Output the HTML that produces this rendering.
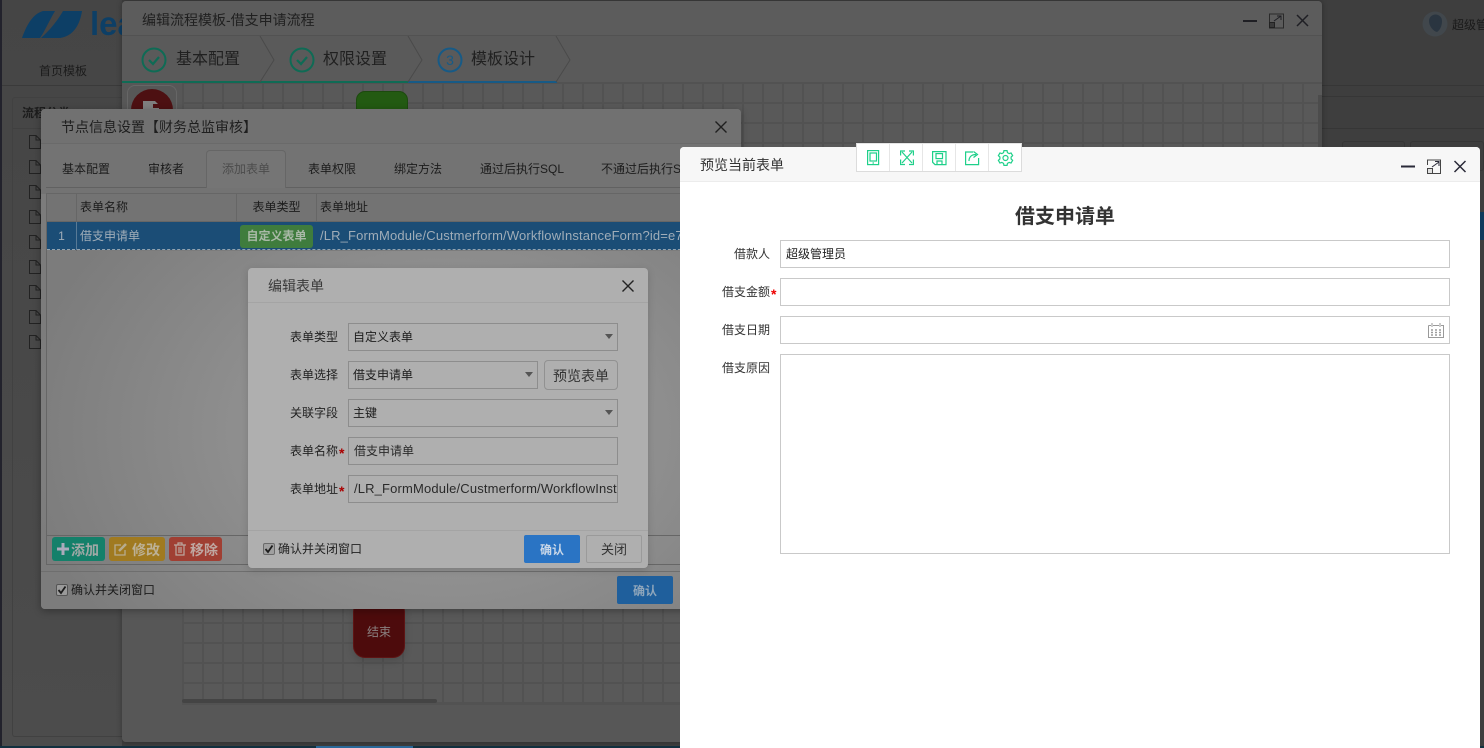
<!DOCTYPE html>
<html lang="zh-CN">
<head>
<meta charset="utf-8">
<title>预览当前表单</title>
<style>
html,body{margin:0;padding:0;width:1484px;height:748px;overflow:hidden;background:#3e3e3e}
body{position:relative;font-family:"Liberation Sans","Noto Sans CJK SC",sans-serif;font-size:12px;color:#222}
div,span,svg{position:absolute;box-sizing:border-box}
.t{white-space:nowrap;line-height:16px;height:16px}
.c{text-align:center}
.r{text-align:right}
.star{color:#a00;font-size:14px}
</style>
</head>
<body>
<!-- background page -->
<div style="left:0;top:0;width:122px;height:748px;background:linear-gradient(#454545,#4c4c4c)"></div>
<div style="left:0;top:0;width:2px;height:748px;background:#22222c"></div>
<svg style="left:22px;top:11px" width="60" height="28" viewBox="0 0 60 28"><path d="M0 27C5 13 11 3 21 0H33C27 10 23 20 18 27Z" fill="#0d3f66"/><path d="M19 27C28 19 36 9 41 0H60C58 13 52 25 38 27Z" fill="#0d3f66"/></svg>
<div class="t" style="left:90px;top:6px;height:36px;line-height:36px;font-size:33px;font-weight:bold;color:#0d3f66;width:32px;overflow:hidden">lea</div>
<div class="t" style="left:39px;top:63px;color:#1c1c1c">首页模板</div>
<div style="left:2px;top:85px;width:120px;height:1px;background:#3a3a3a"></div>
<div style="left:12px;top:97px;width:110px;height:640px;border:1px solid #414141;border-right:0;border-radius:3px 0 0 3px"></div>
<div style="left:13px;top:128px;width:109px;height:1px;background:#404040"></div>
<div class="t" style="left:22px;top:105px;font-weight:bold;color:#1c1c1c">流程分类</div>
<svg style="left:29px;top:135px" width="12" height="216" viewBox="0 0 12 216" fill="none" stroke="#222">
  <path d="M.5 .5H7L11.500 5V13.500H.5ZM7 .5V5H11.500"/>
  <path d="M.5 25.500H7L11.500 30V38.500H.5ZM7 25.500V30H11.500"/>
  <path d="M.5 50.500H7L11.500 55V63.500H.5ZM7 50.500V55H11.500"/>
  <path d="M.5 75.500H7L11.500 80V88.500H.5ZM7 75.500V80H11.500"/>
  <path d="M.5 100.500H7L11.500 105V113.500H.5ZM7 100.500V105H11.500"/>
  <path d="M.5 125.500H7L11.500 130V138.500H.5ZM7 125.500V130H11.500"/>
  <path d="M.5 150.500H7L11.500 155V163.500H.5ZM7 150.500V155H11.500"/>
  <path d="M.5 175.500H7L11.500 180V188.500H.5ZM7 175.500V180H11.500"/>
  <path d="M.5 200.500H7L11.500 205V213.500H.5ZM7 200.500V205H11.500"/>
</svg>
<div style="left:0;top:746px;width:1484px;height:2px;background:#12303f"></div>
<div style="left:316px;top:746px;width:97px;height:2px;background:#2b6a9b"></div>

<!-- right side behind -->
<svg style="left:1422px;top:11px" width="26" height="26" viewBox="0 0 26 26"><circle cx="13" cy="13" r="12.500" fill="#41474c"/><path d="M7 10a6.500 6.500 0 0 1 13 0c0 5-2 9-5 11-4-1-8-6-8-11z" fill="#2a3540"/></svg>
<div class="t" style="left:1452px;top:17px;color:#1a1a1a;width:32px;overflow:hidden">超级管理员</div>
<div style="left:1322px;top:85px;width:162px;height:1px;background:#363636"></div>
<div style="left:1322px;top:96px;width:162px;height:1px;background:#363636"></div>
<div style="left:1322px;top:128px;width:162px;height:1px;background:#363636"></div>
<div style="left:1342px;top:141px;width:63px;height:30px;border:1px solid #363636;border-radius:3px"></div>
<div style="left:1410px;top:141px;width:74px;height:30px;border:1px solid #363636;border-radius:3px"></div>
<div style="left:1480px;top:212px;width:4px;height:28px;background:#0f3a5c"></div>

<!-- flow template dialog -->
<div style="left:122px;top:1px;width:1200px;height:741px;background:#585858;border-radius:4px;overflow:hidden;box-shadow:0 0 6px rgba(0,0,0,.3)">
  <div style="left:0;top:0;width:1200px;height:35px;background:#5c5c5c;border-bottom:1px solid #525252"></div>
  <div style="left:0;top:35px;width:1200px;height:47px;background:#5a5a5a"></div>
  <div style="left:60px;top:81px;width:1140px;height:622px;background-color:#595959;background-image:linear-gradient(90deg,#525252 2px,transparent 2px),linear-gradient(#525252 2px,transparent 2px);background-size:20px 20px;background-position:0 0"></div>
  <div style="left:0;top:81px;width:60px;height:660px;background:#575757"></div>
  <div style="left:60px;top:703px;width:1140px;height:38px;background:#575757;border-top:1px solid #525252"></div>
  <div style="left:60px;top:698px;width:255px;height:4px;background:#444;border-radius:2px"></div>
  <div style="left:1196px;top:94px;width:4px;height:400px;background:#4c4c4c"></div>
</div>
<div class="t" style="left:142px;top:12px;font-size:14px;color:#202020">编辑流程模板-借支申请流程</div>
<svg style="left:1241px;top:11px" width="70" height="20" viewBox="0 0 70 20" fill="none" stroke="#1f1f24"><path d="M2 10H16" stroke-width="2"/><rect x="28.500" y="3" width="14" height="14" stroke="#2a2a2a"/><rect x="28.500" y="11.500" width="5" height="5" fill="#3a3a3a" stroke="#222"/><path d="M33 10L40 5M36 5H40V9" stroke-width="1"/><path d="M56 4L67 15M67 4L56 15" stroke-width="1.500"/></svg>

<!-- steps -->
<div style="left:122px;top:81px;width:286px;height:2px;background:#0f6b55"></div>
<div style="left:408px;top:81px;width:149px;height:2px;background:#175a86"></div>
<svg style="left:122px;top:36px" width="460" height="47" viewBox="0 0 460 47" fill="none">
  <path d="M138 0L152 24L138 46M286 0L300 24L286 46M434 0L448 24L434 46" stroke="#4a4a4a"/>
  <circle cx="32" cy="24" r="11.500" stroke="#0f6b55" stroke-width="2"/><path d="M27 24l4 4 6-7" stroke="#0f6b55" stroke-width="2.200"/>
  <circle cx="180" cy="24" r="11.500" stroke="#0f6b55" stroke-width="2"/><path d="M175 24l4 4 6-7" stroke="#0f6b55" stroke-width="2.200"/>
  <circle cx="328" cy="24" r="11.500" stroke="#175a86" stroke-width="2"/>
</svg>
<div class="t c" style="left:440px;top:52px;width:20px;font-size:14px;color:#175a86">3</div>
<div class="t" style="left:176px;top:52px;font-size:16px;color:#202020">基本配置</div>
<div class="t" style="left:323px;top:52px;font-size:16px;color:#202020">权限设置</div>
<div class="t" style="left:471px;top:52px;font-size:16px;color:#202020">模板设计</div>

<!-- nodes -->
<div style="left:127px;top:85px;width:50px;height:40px;border:1px solid #666;border-bottom:0;border-radius:8px 8px 0 0"></div>
<div style="left:131px;top:89px;width:42px;height:42px;border-radius:50%;background:#4d1012"></div>
<svg style="left:143px;top:101px" width="18" height="12" viewBox="0 0 18 12"><path d="M0 0H12L15 3H10V7H16V12H0Z" fill="#7f7f7f"/></svg>
<div style="left:356px;top:91px;width:52px;height:30px;background:#235a12;border:1px solid #1c4a0e;border-radius:9px 9px 0 0"></div>
<div style="left:353px;top:600px;width:52px;height:58px;background:#4d0b0c;border:1px solid #5e1414;border-radius:12px;box-shadow:0 3px 8px rgba(0,0,0,.15)"></div>
<div class="t c" style="left:353px;top:624px;width:52px;color:#8a8080">结束</div>

<!-- node dialog -->
<div style="left:41px;top:109px;width:700px;height:500px;background:#7c7c7c;border-radius:4px;overflow:hidden;box-shadow:0 2px 8px rgba(0,0,0,.3)">
  <div style="left:0;top:142px;width:700px;height:358px;background:radial-gradient(ellipse 430px 320px at 407px 180px,#a0a0a0,#7c7c7c 100%)"></div>
  <div style="left:0;top:0;width:700px;height:35px;background:#717171;border-bottom:1px solid #6a6a6a"></div>
  <div style="left:0;top:35px;width:700px;height:50px;background:#737373"></div>
  <div style="left:5px;top:78px;width:695px;height:1px;background:#616161"></div>
  <div style="left:165px;top:41px;width:80px;height:38px;background:#757575;border:1px solid #666;border-bottom:0;border-radius:4px 4px 0 0"></div>
  <div style="left:5px;top:84px;width:695px;height:372px;border:1px solid #666"></div>
  <div style="left:6px;top:85px;width:694px;height:28px;background:#737373;border-bottom:1px solid #666"></div>
  <div style="left:35px;top:85px;width:1px;height:57px;background:#666"></div>
  <div style="left:195px;top:85px;width:1px;height:28px;background:#666"></div>
  <div style="left:275px;top:85px;width:1px;height:28px;background:#666"></div>
  <div style="left:6px;top:113px;width:694px;height:28px;background:#1b4d76;border-bottom:1px dashed #92a3b0"></div>
  <div style="left:35px;top:113px;width:1px;height:28px;background:#587a96"></div>
  <div style="left:199px;top:116px;width:73px;height:23px;background:#3f7c3d;border-radius:3px"></div>
  <div style="left:5px;top:426px;width:695px;height:1px;background:#666"></div>
  <div style="left:0;top:462px;width:700px;height:1px;background:#6e6e6e"></div>
  <div style="left:576px;top:467px;width:56px;height:28px;background:#1f5f9c;border-radius:2px"></div>
</div>
<div class="t" style="left:61px;top:119px;font-size:14px;color:#1e1e1e">节点信息设置【财务总监审核】</div>
<svg style="left:714px;top:120px" width="14" height="14" viewBox="0 0 14 14"><path d="M1.500 1.500L12.500 12.500M12.500 1.500L1.500 12.500" stroke="#1f1f1f" stroke-width="1.400"/></svg>
<div class="t" style="left:62px;top:161px;color:#1c1c1c">基本配置</div>
<div class="t" style="left:148px;top:161px;color:#1c1c1c">审核者</div>
<div class="t" style="left:222px;top:161px;color:#4c4c4c">添加表单</div>
<div class="t" style="left:308px;top:161px;color:#1c1c1c">表单权限</div>
<div class="t" style="left:394px;top:161px;color:#1c1c1c">绑定方法</div>
<div class="t" style="left:480px;top:161px;color:#1c1c1c">通过后执行SQL</div>
<div class="t" style="left:601px;top:161px;width:79px;overflow:hidden;color:#1c1c1c">不通过后执行SQL</div>
<div class="t" style="left:80px;top:199px;color:#1c1c1c">表单名称</div>
<div class="t c" style="left:237px;top:199px;width:79px;color:#1c1c1c">表单类型</div>
<div class="t" style="left:320px;top:199px;color:#1c1c1c">表单地址</div>
<div class="t c" style="left:47px;top:228px;width:29px;color:#a0adb8">1</div>
<div class="t" style="left:80px;top:228px;color:#a0adb8">借支申请单</div>
<div class="t c" style="left:240px;top:228px;width:73px;color:#a9b9a7;font-weight:bold">自定义表单</div>
<div class="t" style="left:320px;top:228px;width:360px;overflow:hidden;color:#a0adb8;font-size:13px;letter-spacing:.15px">/LR_FormModule/Custmerform/WorkflowInstanceForm?id=e7</div>

<!-- node toolbar buttons -->
<div style="left:52px;top:537px;width:53px;height:24px;background:#14806a;border-radius:3px"></div>
<div style="left:109px;top:537px;width:56px;height:24px;background:#a07a20;border-radius:3px"></div>
<div style="left:169px;top:537px;width:53px;height:24px;background:#a03f33;border-radius:3px"></div>
<svg style="left:57px;top:543px" width="12" height="12" viewBox="0 0 12 12"><path d="M6 0V12M0 6H12" stroke="#aab" stroke-width="3"/></svg>
<svg style="left:114px;top:542px" width="14" height="14" viewBox="0 0 14 14" fill="none" stroke="#b7ac8f"><path d="M11 8V13H1V3H7" stroke-width="1.300"/><path d="M5 9L12 2" stroke-width="2.500"/></svg>
<svg style="left:174px;top:542px" width="12" height="14" viewBox="0 0 12 14" fill="none" stroke="#bba79f" stroke-width="1.200"><path d="M0 3H12M4 3V1H8V3M2 3V13H10V3M5 5V11M7 5V11"/></svg>
<div class="t" style="left:71px;top:542px;font-size:14px;font-weight:bold;color:#a0a8a6">添加</div>
<div class="t" style="left:132px;top:542px;font-size:14px;font-weight:bold;color:#bcb196">修改</div>
<div class="t" style="left:190px;top:542px;font-size:14px;font-weight:bold;color:#bfa8a2">移除</div>
<div style="left:56px;top:584px;width:12px;height:12px;background:#9a9a9a;border:1px solid #555;border-radius:2px"></div>
<svg style="left:57px;top:585px" width="10" height="10" viewBox="0 0 10 10"><path d="M1.500 5L4 8L8.500 1.500" fill="none" stroke="#1c1c1c" stroke-width="1.800"/></svg>
<div class="t" style="left:71px;top:582px;color:#1c1c1c">确认并关闭窗口</div>
<div class="t c" style="left:617px;top:583px;width:56px;color:#8fa6bb;font-weight:bold">确认</div>

<!-- edit dialog -->
<div style="left:248px;top:268px;width:400px;height:300px;background:#afafaf;border-radius:4px;box-shadow:0 2px 8px rgba(0,0,0,.15)">
  <div style="left:0;top:34px;width:400px;height:1px;background:#a4a4a4"></div>
  <div style="left:0;top:262px;width:400px;height:1px;background:#a4a4a4"></div>
</div>
<div class="t" style="left:268px;top:278px;font-size:14px;color:#3a3a3a">编辑表单</div>
<svg style="left:621px;top:279px" width="14" height="14" viewBox="0 0 14 14"><path d="M1.500 1.500L12.500 12.500M12.500 1.500L1.500 12.500" stroke="#222" stroke-width="1.400"/></svg>
<div class="t r" style="left:278px;top:329px;width:60px;color:#222">表单类型</div>
<div class="t r" style="left:278px;top:367px;width:60px;color:#222">表单选择</div>
<div class="t r" style="left:278px;top:405px;width:60px;color:#222">关联字段</div>
<div class="t r" style="left:278px;top:443px;width:60px;color:#222">表单名称</div>
<div class="t r" style="left:278px;top:481px;width:60px;color:#222">表单地址</div>
<div class="t star" style="left:339px;top:445px;font-weight:bold">*</div>
<div class="t star" style="left:339px;top:483px;font-weight:bold">*</div>
<div style="left:348px;top:323px;width:270px;height:28px;border:1px solid #8d8d8d"></div>
<div style="left:348px;top:361px;width:190px;height:28px;border:1px solid #8d8d8d"></div>
<div style="left:544px;top:360px;width:74px;height:30px;border:1px solid #919191;border-radius:4px"></div>
<div style="left:348px;top:399px;width:270px;height:28px;border:1px solid #8d8d8d"></div>
<div style="left:348px;top:437px;width:270px;height:28px;border:1px solid #8d8d8d"></div>
<div style="left:348px;top:475px;width:270px;height:28px;border:1px solid #8d8d8d"></div>
<div class="t" style="left:353px;top:329px;color:#1c1c1c">自定义表单</div>
<div class="t" style="left:353px;top:367px;color:#1c1c1c">借支申请单</div>
<div class="t c" style="left:544px;top:368px;width:74px;font-size:14px;color:#333">预览表单</div>
<div class="t" style="left:353px;top:405px;color:#1c1c1c">主键</div>
<div class="t" style="left:354px;top:443px;color:#2a2a2a">借支申请单</div>
<div class="t" style="left:354px;top:481px;width:263px;overflow:hidden;color:#2a2a2a;font-size:13px;letter-spacing:.15px">/LR_FormModule/Custmerform/WorkflowInstanceForm</div>
<svg style="left:605px;top:334px" width="8" height="5" viewBox="0 0 8 5"><path d="M0 0H8L4 5Z" fill="#555"/></svg>
<svg style="left:525px;top:372px" width="8" height="5" viewBox="0 0 8 5"><path d="M0 0H8L4 5Z" fill="#555"/></svg>
<svg style="left:605px;top:410px" width="8" height="5" viewBox="0 0 8 5"><path d="M0 0H8L4 5Z" fill="#555"/></svg>
<div style="left:263px;top:543px;width:12px;height:12px;background:#a0a0a0;border:1px solid #6a6a6a;border-radius:2px"></div>
<svg style="left:264px;top:544px" width="10" height="10" viewBox="0 0 10 10"><path d="M1.500 5L4 8L8.500 1.500" fill="none" stroke="#1c1c1c" stroke-width="1.800"/></svg>
<div class="t" style="left:278px;top:541px;color:#222">确认并关闭窗口</div>
<div style="left:524px;top:535px;width:56px;height:28px;background:#2a74c4;border-radius:2px"></div>
<div class="t c" style="left:524px;top:542px;width:56px;color:#c8d7e8;font-weight:bold">确认</div>
<div style="left:586px;top:535px;width:56px;height:28px;border:1px solid #9a9a9a;border-radius:2px"></div>
<div class="t c" style="left:586px;top:542px;width:56px;font-size:13px;color:#333">关闭</div>

<!-- preview dialog -->
<div style="left:680px;top:147px;width:800px;height:601px;background:#fff;border-radius:4px 4px 0 0;overflow:hidden">
  <div style="left:0;top:0;width:800px;height:35px;background:#f7f7f7;border-bottom:1px solid #ececec"></div>
</div>
<div class="t" style="left:700px;top:157px;font-size:14px;color:#333">预览当前表单</div>
<svg style="left:1399px;top:157px" width="70" height="20" viewBox="0 0 70 20" fill="none" stroke="#2a2a38"><path d="M2 9.500H16" stroke-width="2"/><path d="M28.500 8V3H41.500V16.500H33" stroke="#444"/><rect x="28.500" y="11.500" width="5" height="5" stroke="#444" fill="#e0e0e0"/><path d="M33 10L40 5M36 4.500H40V9"/><path d="M55.500 4L66.500 15M66.500 4L55.500 15" stroke-width="1.500"/></svg>

<div style="left:856px;top:143px;width:166px;height:29px;background:#fff;border:1px solid #dcdcdc;border-top-color:#e4e4e4"></div>
<div style="left:889px;top:144px;width:1px;height:27px;background:#e6e6e6"></div>
<div style="left:922px;top:144px;width:1px;height:27px;background:#e6e6e6"></div>
<div style="left:955px;top:144px;width:1px;height:27px;background:#e6e6e6"></div>
<div style="left:988px;top:144px;width:1px;height:27px;background:#e6e6e6"></div>
<svg style="left:865px;top:149px" width="150" height="18" viewBox="0 0 150 18" fill="none" stroke="#1fd08a" stroke-width="1.200">
  <rect x="2.600" y="1.600" width="11" height="14"/><rect x="5" y="4" width="6.500" height="8"/><path d="M7.500 14H9"/>
  <path d="M37 3L47 14M47 3L37 14M35.600 6.500V2H40M48.400 6.500V2H44M35.600 10.500V15.500H40M48.400 10.500V15.500H44"/>
  <path d="M67.600 2.600H81V15.600H70L67.600 13.200Z"/><rect x="71" y="4.600" width="6.500" height="5"/><path d="M72 15.600V12H77V15.600"/>
  <path d="M108 3H100.600V15.600H113.600V9"/><path d="M104 12C104 7.500 107 5.500 111 5.500M108.500 2.500L112.500 5.500L108.500 8.500"/>
  <g transform="translate(140.500 9)"><path d="M-1.560 -7.340L1.560 -7.340L1.950 -5.360L3.660 -4.370L5.570 -5.020L7.130 -2.320L5.610 -.99L5.610 .99L7.130 2.320L5.570 5.020L3.660 4.370L1.950 5.360L1.560 7.340L-1.560 7.340L-1.950 5.360L-3.660 4.370L-5.570 5.020L-7.130 2.320L-5.610 .99L-5.610 -.99L-7.130 -2.320L-5.570 -5.020L-3.660 -4.370L-1.950 -5.360Z"/><circle r="2.500"/></g>
</svg>

<div class="t c" style="left:680px;top:205px;width:770px;height:24px;line-height:24px;font-size:20px;font-weight:bold;color:#333">借支申请单</div>
<div class="t r" style="left:690px;top:246px;width:80px;color:#333">借款人</div>
<div class="t r" style="left:690px;top:284px;width:80px;color:#333">借支金额</div>
<div class="t" style="left:771px;top:286px;color:#e00;font-weight:bold;font-size:14px">*</div>
<div class="t r" style="left:690px;top:322px;width:80px;color:#333">借支日期</div>
<div class="t r" style="left:690px;top:360px;width:80px;color:#333">借支原因</div>
<div style="left:780px;top:240px;width:670px;height:28px;border:1px solid #c9c9c9"></div>
<div class="t" style="left:786px;top:246px;color:#222">超级管理员</div>
<div style="left:780px;top:278px;width:670px;height:28px;border:1px solid #c9c9c9"></div>
<div style="left:780px;top:316px;width:670px;height:28px;border:1px solid #c9c9c9"></div>
<div style="left:780px;top:354px;width:670px;height:200px;border:1px solid #c9c9c9"></div>
<svg style="left:1428px;top:322px" width="16" height="16" viewBox="0 0 16 16" fill="none" stroke="#9a9a9a"><path d="M.5 3.500V15.500H15.500V3.500H13M3 3.500H.5M5 3.500H11"/><path d="M4 1V5M12 1V5"/><path d="M3 8H5M7 8H9M11 8H13M3 10.500H5M7 10.500H9M11 10.500H13M3 13H5M7 13H9M11 13H13" stroke-width="1.400"/></svg>
</body>
</html>
